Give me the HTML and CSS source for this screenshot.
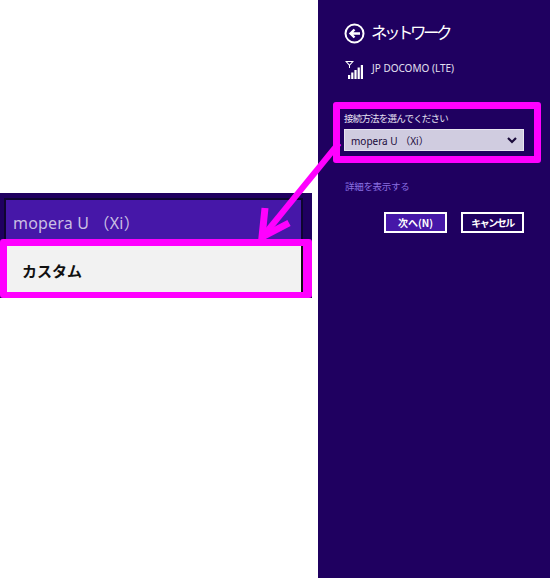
FILE: index.html
```html
<!DOCTYPE html>
<html lang="ja">
<head>
<meta charset="utf-8">
<title>ネットワーク</title>
<link rel="stylesheet" href="styles.css">
</head>
<body>
<div class="page">
  <section class="detail">
    <div class="crop">
      <div class="crop-select"><span class="crop-value">mopera U （Xi）</span></div>
      <div class="crop-highlight">
        <div class="crop-option">カスタム</div>
      </div>
    </div>
  </section>
  <aside class="panel">
    <header class="head">
      <svg class="back" width="21" height="21" viewBox="0 0 21 21" fill="none" stroke="#fff">
        <circle cx="10.5" cy="10.5" r="9" stroke-width="2"/>
        <path d="M16 10.5H7M10.5 6.5l-4 4 4 4" stroke-width="2.4"/>
      </svg>
      <h1 class="title">ネットワーク</h1>
    </header>
    <div class="carrier">
      <svg class="signal" width="20" height="20" viewBox="0 0 20 20" fill="#fff">
        <path d="M0 1h9L5 5.500V8H4V5.500zM2.200 2l2.300 2.500L6.800 2z"/>
        <rect x="3" y="15" width="2.200" height="4"/>
        <rect x="6.200" y="12.500" width="2.200" height="6.500"/>
        <rect x="9.400" y="10" width="2.200" height="9"/>
        <rect x="12.600" y="7.500" width="2.200" height="11.500"/>
        <rect x="15.800" y="5" width="2.200" height="14"/>
      </svg>
      <span class="carrier-name">JP DOCOMO (LTE)</span>
    </div>
    <div class="connect">
      <label class="connect-label">接続方法を選んでください</label>
      <div class="select">
        <span>mopera U （Xi）</span>
        <svg width="10" height="7" viewBox="0 0 10 7" fill="none" stroke="#1a0a3a" stroke-width="2.200">
          <path d="M1 1l4 4 4-4"/>
        </svg>
      </div>
    </div>
    <a class="more">詳細を表示する</a>
    <div class="actions">
      <button class="btn btn-primary">次へ(N)</button>
      <button class="btn btn-cancel">キャンセル</button>
    </div>
  </aside>
</div>
<svg class="arrow" width="100" height="120" viewBox="0 0 100 120" fill="none" stroke="#ff00ff" stroke-width="6">
  <path d="M83 22 8 114"/>
  <path d="M9 87 6 116 33 102" stroke-width="7"/>
</svg>
</body>
</html>
```
FILE: styles.css
```css
* { box-sizing: border-box; }
html, body { margin: 0; padding: 0; }
body {
  width: 550px;
  height: 578px;
  overflow: hidden;
  position: relative;
  background: #fff;
  font-family: "Noto Sans CJK JP", "Liberation Sans", sans-serif;
}
.page { display: flex; height: 578px; }
.detail { width: 318px; padding-top: 193px; flex: none; }
.crop {
  width: 312px;
  height: 105px;
  background: #1f0060;
  padding-top: 5px;
  position: relative;
}
.crop-select {
  margin-left: 4px;
  width: 299px;
  height: 45px;
  background: #4617a8;
  border: 2px solid #0e0530;
  border-bottom: 0;
  padding: 13px 0 0 7px;
}
.crop-value {
  display: block;
  color: #c9bfe3;
  font-size: 16px;
  font-weight: 400;
  line-height: 20px;
  letter-spacing: 0.2px;
  font-family: "Noto Sans", "Noto Sans CJK JP", sans-serif;
}
.crop-highlight {
  position: absolute;
  left: 0;
  top: 46px;
  width: 312px;
  height: 59px;
  border: 7px solid #ff00ff;
  border-bottom-width: 6px;
  border-right-width: 9px;
  border-radius: 3px;
}
.crop-option {
  height: 100%;
  background: #f2f2f2;
  border-right: 2px solid #111;
  padding-left: 15px;
  font-size: 15px;
  font-weight: 700;
  line-height: 50px;
  color: #111;
}
.panel {
  width: 232px;
  flex: none;
  background: #1f0060;
  padding: 22px 0 0 27px;
  color: #fff;
}
.head { display: flex; align-items: center; gap: 6px; height: 22px; }
.back { flex: none; margin-left: -1px; }
.title {
  margin: -2px 0 0;
  font-size: 16.500px;
  font-weight: 400;
  line-height: 20px;
  letter-spacing: -3.500px;
}
.carrier {
  display: flex;
  align-items: flex-start;
  gap: 7px;
  margin-top: 16px;
  height: 20px;
}
.signal { flex: none; }
.carrier-name {
  padding-top: 1px;
  font-size: 10px;
  line-height: 14px;
  color: #e4e0f0;
  font-family: "Noto Sans", sans-serif;
}
.connect {
  width: 208px;
  height: 61px;
  margin: 22px 0 0 -12px;
  border: 7px solid #ff00ff;
  border-radius: 3px;
  padding: 0 0 0 4px;
}
.connect-label {
  display: block;
  height: 20px;
  font-size: 9.500px;
  line-height: 18px;
  letter-spacing: -0.8px;
  color: #e4e0f0;
}
.select {
  display: flex;
  align-items: center;
  justify-content: space-between;
  width: 180px;
  height: 22px;
  background: #d0cce0;
  border: 1px solid #e8e6f0;
  padding: 0 6px;
  font-size: 10px;
  color: #1a0a3a;
  font-family: "Noto Sans", "Noto Sans CJK JP", sans-serif;
}
.more {
  display: block;
  margin-top: 16px;
  font-size: 9.500px;
  line-height: 14px;
  letter-spacing: -0.3px;
  color: #8a6fe0;
}
.actions {
  display: flex;
  gap: 14px;
  margin: 19px 0 0 39px;
}
.btn {
  width: 63px;
  height: 21px;
  padding: 0;
  background: #1f0060;
  border: 2px solid #fff;
  color: #fff;
  font: 700 10px/17px "Noto Sans CJK JP", sans-serif;
}
.btn-primary { background: #4617a8; }
.btn-cancel { letter-spacing: -1.500px; }
.arrow {
  position: absolute;
  left: 256px;
  top: 121px;
}
```
